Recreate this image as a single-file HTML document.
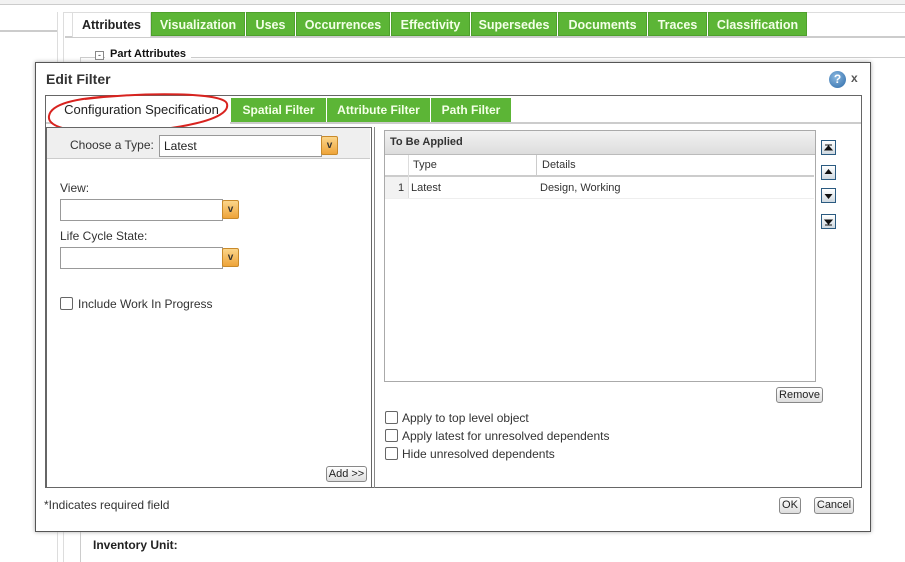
<!DOCTYPE html>
<html><head><style>
*{box-sizing:border-box;margin:0;padding:0}
body{width:905px;height:562px;position:relative;overflow:hidden;background:#fff;font-family:"Liberation Sans",Arial,sans-serif;font-size:12px;color:#333}
.a{position:absolute}
.tab{position:absolute;background:#5cb536;color:#f4ffe8;font-weight:bold;font-size:12.5px;text-align:center;line-height:24px;border:1px solid #4ea02c}
.dtab{position:absolute;background:#5cb536;color:#f4ffe8;font-weight:bold;font-size:12px;text-align:center;line-height:24px}
.sel{position:absolute;background:#fff;border:1px solid #999}
.dd{position:absolute;width:17px;height:19px;background:linear-gradient(#fbd58a,#eea43a);border:1px solid #c98a2a;border-radius:2px;text-align:center;font-size:10px;line-height:17px;color:#333;font-weight:bold}
.btn{position:absolute;border:1px solid #888;border-radius:3px;background:linear-gradient(#fff,#ddd);font-size:11px;text-align:center;line-height:14px;color:#222}
.cb{position:absolute;width:13px;height:13px;border:1px solid #666;border-radius:2px;background:#fff}
.arr{position:absolute;width:15px;height:15px;border:1px solid #2a5a80;background:linear-gradient(#fff,#cfd8e0)}
</style></head><body>
<div class="a" style="left:0;top:0;width:905px;height:5px;background:#f2f2f2;border-bottom:1px solid #ccc"></div>
<div class="a" style="left:0;top:12px;width:58px;height:550px;border-right:1px solid #ddd"></div>
<div class="a" style="left:0;top:12px;width:57px;height:20px;border-bottom:2px solid #ccc"></div>
<div class="a" style="left:63px;top:12px;width:842px;height:550px;border-left:1px solid #ddd;border-top:1px solid #ddd"></div>
<div class="a" style="left:65px;top:36px;width:840px;height:2px;background:#ccc"></div>
<div class="a" style="left:72px;top:12px;width:79px;height:25px;background:#fff;border:1px solid #ddd;border-bottom:none;font-weight:bold;font-size:12.5px;line-height:24px;text-align:center;color:#222">Attributes</div>
<div class="tab" style="left:151px;top:12px;width:94px;height:24px">Visualization</div>
<div class="tab" style="left:246px;top:12px;width:49px;height:24px">Uses</div>
<div class="tab" style="left:296px;top:12px;width:94px;height:24px">Occurrences</div>
<div class="tab" style="left:391px;top:12px;width:79px;height:24px">Effectivity</div>
<div class="tab" style="left:471px;top:12px;width:86px;height:24px">Supersedes</div>
<div class="tab" style="left:558px;top:12px;width:89px;height:24px">Documents</div>
<div class="tab" style="left:648px;top:12px;width:59px;height:24px">Traces</div>
<div class="tab" style="left:708px;top:12px;width:99px;height:24px">Classification</div>
<div class="a" style="left:80px;top:57px;width:825px;height:1px;background:#ccc"></div>
<div class="a" style="left:80px;top:57px;width:1px;height:505px;background:#ccc"></div>
<div class="a" style="left:95px;top:51px;width:9px;height:9px;border:1px solid #888;background:#fff;font-size:9px;line-height:6px;text-align:center">-</div>
<div class="a" style="left:105px;top:48px;background:#fff;padding:0 5px;font-weight:bold;font-size:11px;color:#111">Part Attributes</div>
<div class="a" style="left:93px;top:538px;font-weight:bold;font-size:12px;color:#222">Inventory Unit:</div>

<div class="a" style="left:35px;top:62px;width:836px;height:470px;background:#fff;border:1px solid #555;box-shadow:0 0 4px #aaa"></div>
<div class="a" style="left:46px;top:71px;font-weight:bold;font-size:14px;color:#333">Edit Filter</div>
<div class="a" style="left:829px;top:71px;width:17px;height:17px;border-radius:50%;background:radial-gradient(circle at 40% 35%,#8ab8e0,#2d6aa8);color:#fff;font-weight:bold;font-size:12px;text-align:center;line-height:17px">?</div>
<div class="a" style="left:851px;top:71px;font-size:12px;color:#555;font-weight:bold">x</div>
<div class="a" style="left:45px;top:95px;width:817px;height:393px;border:1px solid #666"></div>
<div class="a" style="left:46px;top:122px;width:815px;height:2px;background:#ccc"></div>
<div class="a" style="left:53px;top:97px;width:177px;height:27px;background:#fff;font-size:13px;line-height:25px;text-align:center;color:#222">Configuration Specification</div>
<div class="dtab" style="left:231px;top:98px;width:95px;height:24px">Spatial Filter</div>
<div class="dtab" style="left:327px;top:98px;width:103px;height:24px">Attribute Filter</div>
<div class="dtab" style="left:431px;top:98px;width:80px;height:24px">Path Filter</div>
<svg class="a" style="left:45px;top:90px" width="190" height="50"><path d="M40 9 C100 2 180 2 182 14 C186 30 130 40 80 42 C30 44 2 38 4 26 C6 14 30 8 70 6" fill="none" stroke="#d8231f" stroke-width="2"/></svg>

<div class="a" style="left:46px;top:127px;width:326px;height:361px;border:1px solid #666;border-bottom:none"></div>
<div class="a" style="left:47px;top:128px;width:323px;height:31px;background:#efefef;border-bottom:1px solid #ccc"></div>
<div class="a" style="left:70px;top:138px;font-size:12px">Choose a Type:</div>
<div class="sel" style="left:159px;top:135px;width:163px;height:22px;font-size:12px;line-height:20px;padding-left:4px;color:#222">Latest</div>
<div class="dd" style="left:321px;top:136px">v</div>
<div class="a" style="left:60px;top:181px">View:</div>
<div class="sel" style="left:60px;top:199px;width:163px;height:22px"></div>
<div class="dd" style="left:222px;top:200px">v</div>
<div class="a" style="left:60px;top:229px">Life Cycle State:</div>
<div class="sel" style="left:60px;top:247px;width:163px;height:22px"></div>
<div class="dd" style="left:222px;top:248px">v</div>
<div class="cb" style="left:60px;top:297px"></div>
<div class="a" style="left:78px;top:297px">Include Work In Progress</div>
<div class="btn" style="left:326px;top:466px;width:41px;height:16px">Add &gt;&gt;</div>

<div class="a" style="left:374px;top:127px;width:1px;height:361px;background:#888"></div>
<div class="a" style="left:384px;top:130px;width:432px;height:252px;border:1px solid #aaa"></div>
<div class="a" style="left:385px;top:131px;width:430px;height:24px;background:linear-gradient(#f2f2f2,#ddd);border-bottom:1px solid #bbb;font-weight:bold;font-size:11px;line-height:22px;padding-left:5px">To Be Applied</div>
<div class="a" style="left:385px;top:155px;width:429px;height:22px;border-bottom:2px solid #ccc;background:#fff"></div>
<div class="a" style="left:408px;top:155px;width:1px;height:43px;background:#ddd"></div>
<div class="a" style="left:536px;top:155px;width:1px;height:22px;background:#ccc"></div>
<div class="a" style="left:413px;top:159px;font-size:11px">Type</div>
<div class="a" style="left:542px;top:159px;font-size:11px">Details</div>
<div class="a" style="left:385px;top:177px;width:23px;height:22px;background:#f2f2f2"></div>
<div class="a" style="left:385px;top:198px;width:429px;height:1px;background:#eee"></div>
<div class="a" style="left:398px;top:182px;font-size:11px">1</div>
<div class="a" style="left:411px;top:182px;font-size:11px">Latest</div>
<div class="a" style="left:540px;top:182px;font-size:11px">Design, Working</div>
<div class="arr" style="left:821px;top:140px"><svg width="13" height="13"><path d="M3 4h7M6.5 5l-3.5 4h7z" stroke="#111" fill="#111"/></svg></div>
<div class="arr" style="left:821px;top:165px"><svg width="13" height="13"><path d="M6.5 3l-4 5h8z" fill="#111"/></svg></div>
<div class="arr" style="left:821px;top:188px"><svg width="13" height="13"><path d="M6.5 10l-4-5h8z" fill="#111"/></svg></div>
<div class="arr" style="left:821px;top:214px"><svg width="13" height="13"><path d="M3 10h7M6.5 9l-3.5-4h7z" stroke="#111" fill="#111"/></svg></div>
<div class="btn" style="left:776px;top:387px;width:47px;height:16px">Remove</div>
<div class="cb" style="left:385px;top:411px"></div><div class="a" style="left:402px;top:411px">Apply to top level object</div>
<div class="cb" style="left:385px;top:429px"></div><div class="a" style="left:402px;top:429px">Apply latest for unresolved dependents</div>
<div class="cb" style="left:385px;top:447px"></div><div class="a" style="left:402px;top:447px">Hide unresolved dependents</div>

<div class="a" style="left:44px;top:498px">*Indicates required field</div>
<div class="btn" style="left:779px;top:497px;width:22px;height:17px">OK</div>
<div class="btn" style="left:814px;top:497px;width:40px;height:17px">Cancel</div>
</body></html>
